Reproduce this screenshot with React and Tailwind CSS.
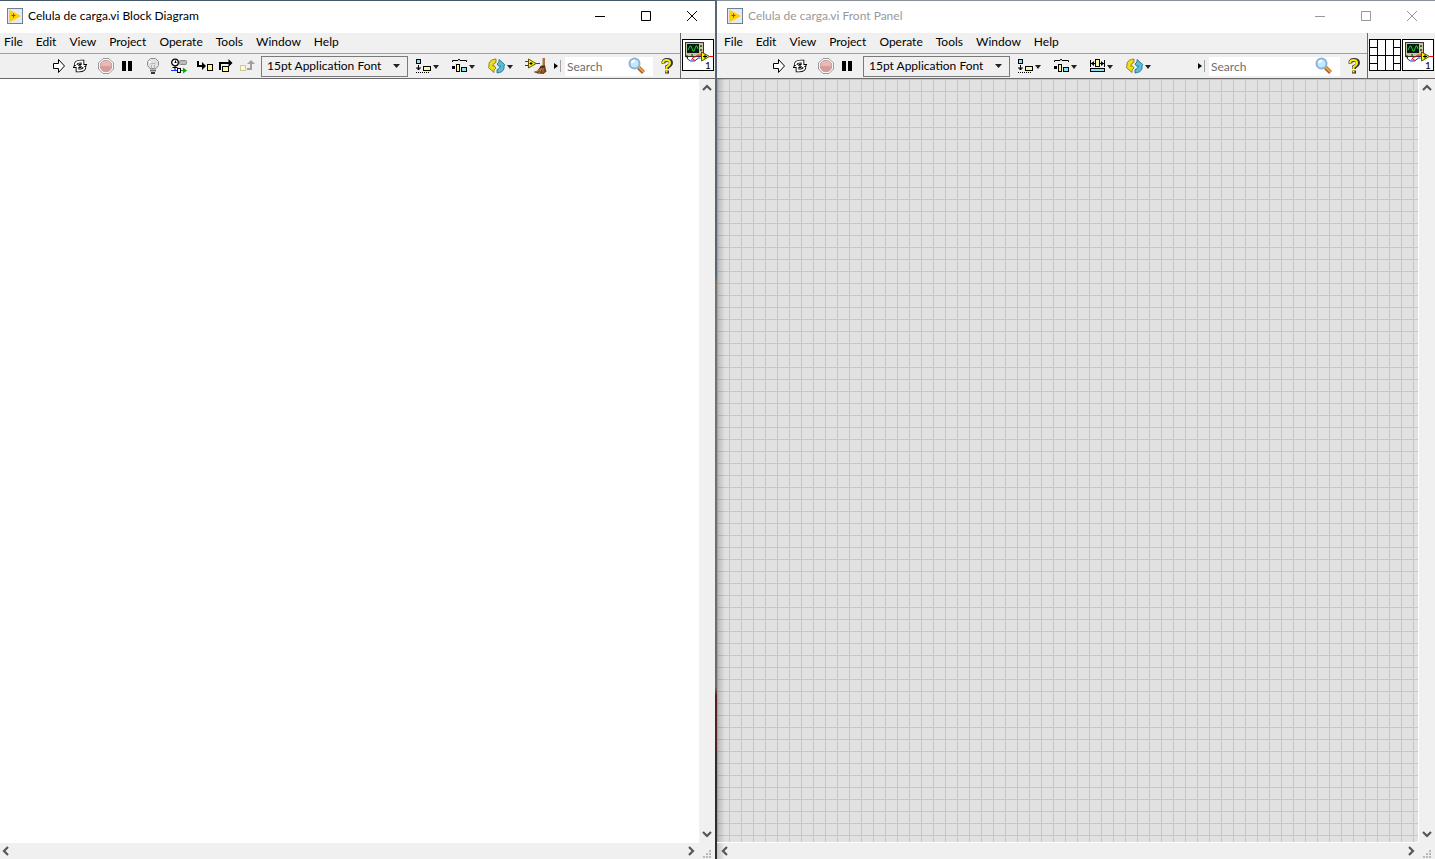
import React from "react";

const MENUS = ["File", "Edit", "View", "Project", "Operate", "Tools", "Window", "Help"];

function Svg({ w, h, children }) {
  return (
    <svg width={w} height={h} viewBox={`0 0 ${w} ${h}`} className="block shrink-0" aria-hidden="true">
      {children}
    </svg>
  );
}

const AppIcon = () => (
  <Svg w={16} h={16}>
    <rect x=".5" y=".5" width="15" height="15" fill="#e4e9f2" stroke="#6e7f98" />
    <path d="M2 2.6Q2 1.6 3 2L13.2 7.4Q14 8 13.2 8.6L3 14Q2 14.4 2 13.4z" fill="#ffd200" />
    <path d="M4.5 7.5h4M6.5 5.5v4" stroke="#4a5570" strokeWidth="1" />
  </Svg>
);

const RunIcon = () => (
  <Svg w={12} h={14}>
    <path d="M.5 4.5h5v-4l6 6.5-6 6.5v-4h-5z" fill="#fff" stroke="#000" />
  </Svg>
);

const RunLoopIcon = () => (
  <Svg w={16} h={14}>
    <path d="M3.500 7Q3 2.500 9 2.500h1.500V6" fill="none" stroke="#000" strokeWidth="3.600" />
    <path d="M12.500 7q.5 4.500-5.500 4.500H5.500V8" fill="none" stroke="#000" strokeWidth="3.600" />
    <path d="M7 5.500h8l-4 3.800zM9 8.500H1l4-3.800z" fill="#fff" stroke="#000" />
    <path d="M3.500 6Q3.500 2.500 9 2.500h1.500V7" fill="none" stroke="#fff" strokeWidth="1.800" />
    <path d="M12.500 8q0 3.500-5.500 3.500H5.500V7" fill="none" stroke="#fff" strokeWidth="1.800" />
  </Svg>
);

const AbortIcon = () => (
  <Svg w={16} h={16}>
    <path d="M5 .5h6L15.500 5v6L11 15.500H5L.5 11V5z" fill="#f6f6f6" stroke="#999" />
    <path d="M5.500 2.500h5l3 3v5l-3 3h-5l-3-3v-5z" fill="#d99a9a" stroke="#c7a5a5" />
    <path d="M5.500 3h5L13 5.500V8H3V5.500z" fill="#e7b8b8" />
  </Svg>
);

const PauseIcon = () => (
  <Svg w={10} h={12}>
    <path d="M0 1h4v10H0zM6 1h4v10H6z" fill="#000" />
  </Svg>
);

const BulbIcon = () => (
  <Svg w={14} h={16}>
    <path d="M4 10.500L1.500 7.500v-4l3-3h5l3 3v4l-2.500 3z" fill="#e2e2e2" stroke="#8c8c8c" />
    <path d="M3 3h2v2H3z" fill="#fff" />
    <path d="M4.500 5l1.500 1 1-1 1 1 1.500-1M5.500 7v4M8.500 7v4" fill="none" stroke="#aaa" strokeWidth=".8" />
    <path d="M4 11h6v3H4z" fill="#d8b858" />
    <path d="M4 12.500h6" stroke="#77714e" />
    <path d="M5 14h4v2H5z" fill="#303058" />
  </Svg>
);

const RetainIcon = () => (
  <Svg w={16} h={16}>
    <circle cx="4" cy="4.500" r="3.300" fill="#fff" stroke="#000" strokeWidth="1.300" />
    <path d="M4.500 2.500v2.500M3.500 4.500h2M4 8v4M1.500 9.500h5" fill="none" stroke="#000" />
    <rect x="8.500" y="2.500" width="7" height="4" rx="1" fill="#bbb" stroke="#888" />
    <path d="M0 12.500h6" stroke="#0038ff" />
    <rect x="6.500" y="10.500" width="3" height="4" fill="#fff" stroke="#000" />
    <path d="M10 12h2V9.500l4 3-4 3V13h-2z" fill="#00a818" />
  </Svg>
);

const StepIntoIcon = () => (
  <Svg w={16} h={12}>
    <path d="M1 1v5h6" fill="none" stroke="#000" strokeWidth="2" />
    <path d="M5 2v8l4-4z" />
    <rect x="10.500" y="4.500" width="5" height="6" fill="#fff79a" stroke="#000" />
  </Svg>
);

const StepOverIcon = () => (
  <Svg w={16} h={14}>
    <path d="M2 11V4h9" fill="none" stroke="#000" strokeWidth="2" />
    <path d="M10.500 0v8l4-4z" />
    <rect x="4.500" y="7.500" width="6" height="5" fill="#fff79a" stroke="#000" />
  </Svg>
);

const StepOutIcon = () => (
  <Svg w={16} h={14}>
    <rect x="1.500" y="6.500" width="5" height="5" fill="#fffac8" stroke="#c9c6a5" />
    <path d="M8 10h4V4" fill="none" stroke="#a0a0a0" strokeWidth="2" />
    <path d="M8 5h8l-4-4z" fill="#a0a0a0" />
  </Svg>
);

const Caret = () => <path d="M18 7h6l-3 4z" fill="#222" />;

const AlignIcon = () => (
  <Svg w={25} h={16}>
    <rect x="1.500" y="1.500" width="4" height="4" fill="#82e4f5" stroke="#000" />
    <path d="M3.500 7v5M1 10h5M2 11h3" fill="none" stroke="#000" />
    <path d="M1 14.500h14" stroke="#000" strokeDasharray="1 1" />
    <rect x="8.500" y="8.500" width="7" height="4" fill="#fff79a" stroke="#000" />
    <Caret />
  </Svg>
);

const DistributeIcon = () => (
  <Svg w={25} h={16}>
    <path d="M1.500 4V2.500H7L8 1l1 1.500h6.500V4" fill="none" stroke="#000" />
    <rect x="1" y="8" width="3" height="3" />
    <rect x="5.500" y="6.500" width="3" height="7" fill="#fff79a" stroke="#000" />
    <rect x="10.500" y="9.500" width="5" height="4" fill="#82e4f5" stroke="#000" />
    <Caret />
  </Svg>
);

const ResizeIcon = () => (
  <Svg w={25} h={16}>
    <path d="M1.500 2v7M15.500 2v7M2 5.500h5M10 5.500h5" stroke="#000" />
    <path d="M2 5.500l3-2.500v5zM15 5.500l-3-2.500v5z" />
    <rect x="6.500" y="1.500" width="4" height="7" fill="#fff79a" stroke="#000" />
    <rect x="1.500" y="10.500" width="14" height="3" fill="#82e4f5" stroke="#000" />
    <Caret />
  </Svg>
);

const ReorderIcon = () => (
  <Svg w={27} h={16}>
    <g transform="translate(2 0)">
      <path d="M8 1Q2 1.500 1 5.500V8L.3 9.500l5.700 5V12l2-2-2-2.500L5 8.500V7Q5.500 5 8 4.500z" fill="#f0dd20" stroke="#8c7c00" strokeWidth=".9" />
      <path d="M9 15q6-.5 7-4.500V8l.7-1.500-5.700-5V4L9 6l2 2.500 1-1V9q-.5 2-3 2.500z" fill="#58bdd8" stroke="#24738a" strokeWidth=".9" />
    </g>
    <g transform="translate(3 0)"><Caret /></g>
  </Svg>
);

const CleanUpIcon = () => (
  <Svg w={25} h={18}>
    <path d="M2 4.500h4" stroke="#e00000" />
    <path d="M2 8.500h4" stroke="#0020ff" />
    <path d="M12 6.500h5" stroke="#e00000" />
    <path d="M5.500 2l7.500 4.500-7.500 4.500z" fill="#fff200" stroke="#5e5500" />
    <path d="M6.500 6.500h3M8 5v3" stroke="#000" />
    <path d="M19.500 1h2.500v9h-2.500z" fill="#a8724a" />
    <path d="M18 8.500h4l1.500 6-3 2.500-6-.5-4-1.500 4-1.500z" fill="#74431c" />
    <path d="M13 15l5-3M16 16l3-5M20 15.500V11" stroke="#b8834f" />
    <path d="M17 10.500l5-1.500" stroke="#3d210c" />
  </Svg>
);

const MagnifierIcon = () => (
  <Svg w={18} h={18}>
    <path d="M10.500 10.500l5 5" stroke="#a55b1d" strokeWidth="4" />
    <path d="M10.500 10l5 5" stroke="#f2a14b" strokeWidth="2" />
    <circle cx="6.500" cy="6.500" r="5" fill="#c4e9fb" stroke="#8db2d8" strokeWidth="2" />
    <path d="M4 6q0-2 3-2.500" fill="none" stroke="#fff" strokeWidth="2" />
  </Svg>
);

const HelpIcon = () => (
  <Svg w={12} h={16}>
    <path d="M2.500 5.500Q2 2 6 2t4 3q0 2-4 4v2M6 12.500v3" fill="none" stroke="#333" strokeWidth="4" />
    <path d="M2 5Q2 2 5.500 2T9 5q0 2-3.500 4v2M5.500 12.500v2" fill="none" stroke="#f8ec00" strokeWidth="2" />
  </Svg>
);

const PanesIcon = () => (
  <Svg w={32} h={32}>
    <rect x=".5" y=".5" width="31" height="31" fill="#fff" stroke="#000" />
    <path d="M8.500 0v32M16.500 0v32M24.500 0v32M0 16.500h32M0 8.500h8M0 24.500h8M24 8.500h8M24 24.500h8" stroke="#000" />
  </Svg>
);

const ViIcon = () => (
  <Svg w={32} h={32}>
    <rect x=".5" y=".5" width="31" height="31" fill="#fff" stroke="#000" />
    <rect x="3.500" y="3.500" width="18" height="14" fill="#c9c59b" stroke="#333" />
    <rect x="5" y="5" width="12" height="9" fill="#061c10" />
    <path d="M6 11l2-4h1l2 5h1l2-5h1l1 3" fill="none" stroke="#20c83a" />
    <path d="M19 6v2M19 10v2" stroke="#555" strokeWidth="2" />
    <path d="M5 16v3M10 15v3" stroke="#222" strokeWidth="1" />
    <path d="M5.500 18v2l3 2h4l4-3h2" fill="none" stroke="#002cd0" />
    <path d="M9.500 21l2-3h2l2-2h4M27 17.500h4M11 20l2 1.500" fill="none" stroke="#f00000" />
    <path d="M19.500 13l8 4.500-8 4.500z" fill="#fff200" stroke="#5e5500" />
    <path d="M21 17.500h4M23 15.500v4" stroke="#000" />
    <text x="23" y="30" className="text-[10px]" fill="#000">1</text>
  </Svg>
);

const CHEVRONS = {
  up: "M2 8l4-4 4 4",
  down: "M2 4l4 4 4-4",
  left: "M8 2L4 6l4 4",
  right: "M4 2l4 4-4 4",
};

function ScrollButton({ dir }) {
  return (
    <button type="button" aria-label={`Scroll ${dir}`} className="flex size-4 items-center justify-center">
      <Svg w={12} h={12}>
        <path d={CHEVRONS[dir]} fill="none" stroke="#565656" strokeWidth="2.200" />
      </Svg>
    </button>
  );
}

const Grip = () => (
  <Svg w={10} h={10}>
    <path d="M7 1h2v2H7zM4 4h2v2H4zM7 4h2v2H7zM1 7h2v2H1zM4 7h2v2H4zM7 7h2v2H7z" fill="#b8b8b8" />
  </Svg>
);

function Tool({ label, wide, children }) {
  return (
    <button
      type="button"
      aria-label={label}
      className={wide ? "flex h-6 w-[25px] items-center justify-center" : "flex h-6 w-5 items-center justify-center"}
    >
      {children}
    </button>
  );
}

function TitleBar({ title, active, className }) {
  const tone = active ? "text-black" : "text-[#999999]";
  return (
    <header className={`flex h-8 shrink-0 items-center bg-white pb-0.5 ${tone} ${className}`}>
      <AppIcon />
      <h1 className="ml-[5px] flex-1 truncate">{title}</h1>
      {[
        ["Minimize", "M0 5.500h10"],
        ["Maximize", "M.5.5h9v9h-9z"],
        ["Close", "M0 0l10 10M10 0L0 10"],
      ].map(([label, d]) => (
        <button key={label} type="button" aria-label={label} className="flex h-full w-[46px] items-center justify-center">
          <Svg w={10} h={10}>
            <path d={d} fill="none" stroke="currentColor" />
          </Svg>
        </button>
      ))}
    </header>
  );
}

function FontSelect() {
  return (
    <div className="relative">
      <select aria-label="Text settings" className="block h-[21px] w-[147px] appearance-none border border-[#7a7a7a] bg-[#f0f0f0] pl-[5px]">
        <option>15pt Application Font</option>
      </select>
      <svg width="7" height="4" viewBox="0 0 7 4" className="pointer-events-none absolute top-2 right-2" aria-hidden="true">
        <path d="M0 0h7L3.500 4z" fill="#222" />
      </svg>
    </div>
  );
}

function SearchBox({ className }) {
  return (
    <div className={`flex h-[19px] items-center bg-white pr-[7px] ${className}`}>
      <input type="text" aria-label="Search" placeholder="Search" className="h-[19px] w-0 flex-1 bg-transparent pl-0.5 outline-none placeholder:text-[#6d6d6d]" />
      <button type="button" aria-label="Find"><MagnifierIcon /></button>
    </div>
  );
}

function ViWindow({ title, active, diagram, className }) {
  return (
    <section className={`flex min-w-0 flex-col ${className}`}>
      <TitleBar title={title} active={active} className={diagram ? "pl-[7px]" : "pl-[10px]"} />
      <div className="flex h-[46px] shrink-0 border-b border-[#6a6a6a] bg-[#f0f0f0]">
        <div className="flex min-w-0 flex-1 flex-col">
          <nav className={`flex h-[21px] items-center gap-[13px] border-b border-[#a0a0a0] pb-0.5 ${diagram ? "pl-1" : "pl-[7px]"}`}>
            {MENUS.map((m) => (
              <button key={m} type="button">{m}</button>
            ))}
          </nav>
          <div className={`flex h-6 items-center ${diagram ? "pl-[49px]" : "pl-[52px]"}`}>
            <div className="flex gap-1.5">
              <div className="flex gap-px">
                <Tool label="Run"><RunIcon /></Tool>
                <Tool label="Run continuously"><RunLoopIcon /></Tool>
              </div>
              <div className="flex gap-px">
                <Tool label="Abort"><AbortIcon /></Tool>
                <Tool label="Pause"><PauseIcon /></Tool>
              </div>
              {diagram && (
                <>
                  <Tool label="Highlight execution"><BulbIcon /></Tool>
                  <Tool label="Retain wire values"><RetainIcon /></Tool>
                  <div className="flex gap-px">
                    <Tool label="Step into"><StepIntoIcon /></Tool>
                    <Tool label="Step over"><StepOverIcon /></Tool>
                    <Tool label="Step out"><StepOutIcon /></Tool>
                  </div>
                </>
              )}
            </div>
            <div className={`flex items-center gap-[7px] ${diagram ? "ml-1" : "ml-1.5"}`}>
              <FontSelect />
              <div className="flex gap-[11px]">
                <Tool wide label="Align objects"><AlignIcon /></Tool>
                <Tool wide label="Distribute objects"><DistributeIcon /></Tool>
                {!diagram && <Tool wide label="Resize objects"><ResizeIcon /></Tool>}
                <Tool wide label="Reorder"><ReorderIcon /></Tool>
                {diagram && <Tool wide label="Clean up diagram"><CleanUpIcon /></Tool>}
              </div>
            </div>
            <div className="ml-auto flex items-center pr-[7px]">
              <Svg w={4} h={6}><path d="M0 0l4 3-4 3z" /></Svg>
              <span className="ml-0.5 h-3 w-px bg-[#a0a0a0]" />
              <SearchBox className={diagram ? "ml-1 w-[88px]" : "ml-1 w-[131px]"} />
              <button type="button" aria-label="Help" className="ml-2"><HelpIcon /></button>
            </div>
          </div>
        </div>
        <div className="flex gap-px border-l border-[#6a6a6a] px-px pt-1.5">
          {!diagram && <PanesIcon />}
          <ViIcon />
        </div>
      </div>
      <div className="flex min-h-0 flex-1">
        {diagram ? (
          <main className="flex-1 bg-white" />
        ) : (
          <main className="flex flex-1 border-r border-b border-white bg-[#e1e1e1] bg-[linear-gradient(to_right,#c6c6c6_1px,transparent_1px),linear-gradient(to_bottom,#c6c6c6_1px,transparent_1px)] bg-[size:12px_12px]">
            <div className="w-2 bg-linear-to-r from-black/20 to-transparent" />
          </main>
        )}
        <div className="flex w-4 shrink-0 flex-col items-center justify-between bg-[#f0f0f0] pt-px pb-px">
          <ScrollButton dir="up" />
          <ScrollButton dir="down" />
        </div>
      </div>
      <div className={`flex h-4 shrink-0 items-center bg-[#f0f0f0] ${diagram ? "" : "bg-linear-to-r from-[#c4c4c4] to-[#f0f0f0] to-[8px]"}`}>
        <div className={`flex flex-1 justify-between ${diagram ? "-ml-0.5" : ""}`}>
          <ScrollButton dir="left" />
          <ScrollButton dir="right" />
        </div>
        <div className="flex h-4 w-4 items-end justify-center"><Grip /></div>
      </div>
    </section>
  );
}

export default function App() {
  return (
    <div className="flex h-screen overflow-hidden bg-[#f0f0f0] font-[Lato,sans-serif] text-[12px] leading-4 text-black">
      <ViWindow
        diagram
        active
        title="Celula de carga.vi Block Diagram"
        className="flex-[715_1_0%] border-t border-[#44586a]"
      />
      <div className="w-0.5 shrink-0 bg-[linear-gradient(to_bottom,#566878_0,#566878_32%,#77736e_33%,#6c6c6c_80%,#552020_81%,#552020_87%,#2b2d33_88%)]" />
      <ViWindow
        title="Celula de carga.vi Front Panel"
        className="flex-[718_1_0%] border-t border-[#8a9098]"
      />
    </div>
  );
}
